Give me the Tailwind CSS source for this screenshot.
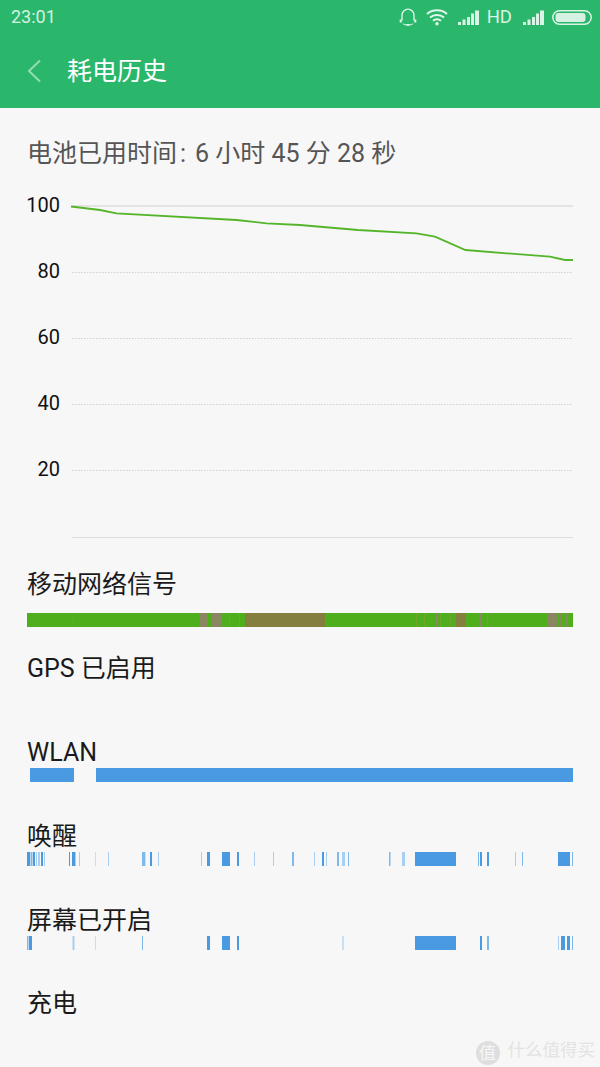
<!DOCTYPE html>
<html lang="zh">
<head>
<meta charset="utf-8">
<script src="https://cdn.jsdelivr.net/npm/@tailwindcss/browser@4"></script>
</head>
<body class="m-0 bg-[#f7f7f7]">
<div class="relative w-[600px] h-[1067px] overflow-hidden bg-[#f7f7f7] font-['Roboto','Noto_Sans_CJK_SC',sans-serif]">
  <header class="h-[108px] bg-[#2ab76b] flex flex-col">
    <div class="h-[34px] flex items-center justify-between pl-[11px] pr-[8px] text-[#d4f1e1]">
      <span class="text-[18px] leading-none">23:01</span>
      <div class="flex items-center">
        <svg class="w-[18px] h-[18px]" viewBox="0 0 18 18" fill="none" stroke="#e4f7ed" stroke-width="1.300"><path d="M3 12.500V7.200a6 6 0 0 1 12 0v5.300"/><path d="M1.700 11.500v3M16.300 11.500v3" stroke-width="2"/><path d="M4 15.800c1 .8 2 1 3.500 1.100M14 15.800c-1 .8-2 1-3.500 1.100" stroke-width="1"/><rect x="7.300" y="16" width="3.400" height="1.800" fill="#e4f7ed" stroke="none"/></svg>
        <svg class="w-[22px] h-[18px] ml-[9px]" viewBox="0 0 22 18" fill="none" stroke="#e4f7ed" stroke-width="2"><path d="M1 6c5.500-5 14.500-5 20 0M4 9.500c3.800-3.400 10.200-3.400 14 0M7 12.700c2.200-1.800 5.800-1.800 8 0"/><circle cx="11" cy="15.700" r="1.700" fill="#e4f7ed" stroke="none"/></svg>
        <svg class="w-[21px] h-[15px] ml-[10px]" viewBox="0 0 21 15" fill="#d9f3e5"><rect x="0" y="12" width="3" height="3"/><rect x="4.500" y="9.500" width="3" height="5.500"/><rect x="9" y="7" width="3" height="8"/><rect x="13" y="3.500" width="3" height="11.500"/><rect x="17" y="0.500" width="4" height="14.500"/></svg>
        <span class="text-[18.500px] leading-none ml-[8px] text-[#d9f3e5]">HD</span>
        <svg class="w-[21px] h-[15px] ml-[11px]" viewBox="0 0 21 15" fill="#d9f3e5"><rect x="0" y="12" width="3" height="3"/><rect x="4.500" y="9.500" width="3" height="5.500"/><rect x="9" y="7" width="3" height="8"/><rect x="13" y="3.500" width="3" height="11.500"/><rect x="17" y="0.500" width="4" height="14.500"/></svg>
        <svg class="w-[40px] h-[15px] ml-[8px]" viewBox="0 0 40 15"><rect x="0.800" y="0.800" width="38.400" height="13.400" rx="6.700" fill="none" stroke="#d9f3e5" stroke-width="1.500"/><rect x="3.500" y="3" width="30" height="9" rx="3" fill="#d4f1e1"/></svg>
      </div>
    </div>
    <div class="flex-1 flex items-center">
      <svg class="w-[14px] h-[24px] ml-[27px]" viewBox="0 0 14 24" fill="none" stroke="#95dcb5" stroke-width="2"><path d="M13 1.500 2 12l11 10.500"/></svg>
      <h1 class="ml-[26px] pt-[1px] text-[25px] leading-none font-normal text-white">耗电历史</h1>
    </div>
  </header>

  <div class="h-[82px] pl-[27px] flex items-center text-[25px] leading-none text-[#555] pt-[8px] whitespace-pre">电池已用时间<span class="ml-[3px] mr-[9px]">:</span>6 小时 45 分 28 秒</div>

  <svg class="block w-[600px] h-[357px]" viewBox="0 190 600 357" font-family="Roboto" font-size="20" fill="#111">
    <line x1="72" x2="573" y1="206" y2="206" stroke="#dedede" stroke-width="1.500"/>
    <g stroke="#cfcfcf" stroke-dasharray="1.500 1.500">
      <line x1="72" x2="573" y1="272.500" y2="272.500"/>
      <line x1="72" x2="573" y1="338.500" y2="338.500"/>
      <line x1="72" x2="573" y1="404.500" y2="404.500"/>
      <line x1="72" x2="573" y1="470.500" y2="470.500"/>
    </g>
    <line x1="72" x2="573" y1="537.500" y2="537.500" stroke="#dedede"/>
    <g text-anchor="end">
      <text x="60" y="212">100</text>
      <text x="60" y="278">80</text>
      <text x="60" y="344">60</text>
      <text x="60" y="410">40</text>
      <text x="60" y="476">20</text>
    </g>
    <polyline fill="none" stroke="#55b52a" stroke-width="1.800" points="71,206.500 100,210 116.500,213.300 236.500,220 266.500,223.300 300,225 358,230 416.500,233.300 435,236.700 465.500,250 550,256.700 565,260 573,260"/>
  </svg>

  <section class="h-[84px] flex flex-col pl-[27px] pr-[27px] pt-[23px]">
    <h2 class="h-[43px] pt-[1px] text-[25px] leading-[28px] font-normal text-[#1a1a1a]">移动网络信号</h2>
    <svg class="block w-[546px] h-[14px]" viewBox="27 0 546 14">
      <rect x="27" width="546" height="14" fill="#4fae1c"/>
      <g fill="#8a8662">
        <rect x="73" width="1" height="14" fill="#7d9a3a"/>
        <rect x="200" width="7.500" height="14"/>
        <rect x="212" width="10" height="14"/>
        <rect x="229" width="1" height="14" fill="#6ea52a"/>
        <rect x="239" width="1" height="14" fill="#6ea52a"/>
        <rect x="245" width="80" height="14" fill="#857f3f"/>
        <rect x="416" width="1" height="14" fill="#6ea52a"/>
        <rect x="424" width="1" height="14" fill="#6ea52a"/>
        <rect x="436" width="2" height="14"/>
        <rect x="440" width="1" height="14" fill="#6ea52a"/>
        <rect x="450" width="1" height="14" fill="#6ea52a"/>
        <rect x="456" width="9.500" height="14" fill="#857f3f"/>
        <rect x="480" width="2" height="14"/>
        <rect x="487" width="1" height="14" fill="#6ea52a"/>
        <rect x="547" width="10" height="14"/>
        <rect x="559" width="2" height="14"/>
        <rect x="565" width="3" height="14"/>
      </g>
    </svg>
  </section>

  <section class="h-[84px] pl-[27px] pr-[27px] pt-[23px]">
    <h2 class="h-[30px] pt-[1px] text-[25px] leading-[28px] font-normal text-[#1a1a1a]">GPS 已启用</h2>
  </section>

  <section class="h-[84px] pl-[27px] pr-[27px] pt-[23px]">
    <h2 class="h-[30px] pt-[1px] text-[25px] leading-[28px] font-normal text-[#1a1a1a]">WLAN</h2>
    <svg class="block w-[546px] h-[14px]" viewBox="27 0 546 14" fill="#4a9ae2">
      <rect x="30" width="44" height="14"/>
      <rect x="96" width="477" height="14"/>
    </svg>
  </section>

  <section class="h-[84px] pl-[27px] pr-[27px] pt-[23px]">
    <h2 class="h-[30px] pt-[1px] text-[25px] leading-[28px] font-normal text-[#1a1a1a]">唤醒</h2>
    <svg class="block w-[546px] h-[14px]" viewBox="27 0 546 14" fill="#4a9ae2">
      <rect x="27" width="3" height="14"/><rect x="30.500" width="2" height="14" fill="#7fb8ea"/><rect x="33" width="2" height="14"/><rect x="36" width="1" height="14" fill="#a8cff0"/>
      <rect x="38" width="2" height="14" fill="#a8cff0"/>
      <rect x="41" width="2" height="14"/><rect x="44" width="1" height="14" fill="#a8cff0"/>
      <rect x="69" width="1" height="14"/><rect x="72" width="3" height="14"/><rect x="75" width="1" height="14" fill="#a8cff0"/><rect x="79" width="1" height="14" fill="#a8cff0"/>
      <rect x="95" width="1" height="14" fill="#c5dff5"/><rect x="108" width="1" height="14" fill="#a8cff0"/>
      <rect x="142" width="3" height="14" fill="#7fb8ea"/><rect x="145" width="1" height="14" fill="#c5dff5"/><rect x="150" width="2" height="14"/><rect x="158" width="1" height="14" fill="#a8cff0"/>
      <rect x="201" width="1" height="14" fill="#a8cff0"/><rect x="207" width="3" height="14"/>
      <rect x="222" width="8" height="14"/>
      <rect x="237" width="2" height="14"/>
      <rect x="254" width="1" height="14" fill="#a8cff0"/><rect x="273" width="1" height="14" fill="#a8cff0"/><rect x="292" width="2" height="14" fill="#7fb8ea"/>
      <rect x="314" width="1" height="14" fill="#a8cff0"/><rect x="322" width="2" height="14"/><rect x="326" width="1" height="14" fill="#a8cff0"/>
      <rect x="337" width="2" height="14" fill="#7fb8ea"/><rect x="342" width="3" height="14" fill="#a8cff0"/><rect x="348" width="1" height="14" fill="#7fb8ea"/>
      <rect x="389" width="1.500" height="14" fill="#7fb8ea"/><rect x="402" width="3" height="14" fill="#a8cff0"/>
      <rect x="415" width="41" height="14"/>
      <rect x="478" width="1" height="14" fill="#7fb8ea"/><rect x="480" width="2" height="14"/><rect x="487" width="2" height="14"/>
      <rect x="515" width="1" height="14" fill="#a8cff0"/><rect x="522" width="1" height="14" fill="#7fb8ea"/>
      <rect x="558" width="12" height="14"/><rect x="572" width="1" height="14" fill="#7fb8ea"/>
    </svg>
  </section>

  <section class="h-[84px] pl-[27px] pr-[27px] pt-[23px]">
    <h2 class="h-[30px] pt-[1px] text-[25px] leading-[28px] font-normal text-[#1a1a1a]">屏幕已开启</h2>
    <svg class="block w-[546px] h-[14px]" viewBox="27 0 546 14" fill="#4a9ae2">
      <rect x="27" width="1.500" height="14" fill="#7fb8ea"/><rect x="29" width="3" height="14"/>
      <rect x="72.500" width="2" height="14" fill="#a8cff0"/>
      <rect x="95" width="1" height="14" fill="#c5dff5"/>
      <rect x="142" width="1" height="14" fill="#7fb8ea"/>
      <rect x="207" width="3" height="14"/>
      <rect x="222" width="8" height="14"/>
      <rect x="237" width="2" height="14"/>
      <rect x="342" width="2" height="14" fill="#c5dff5"/>
      <rect x="415" width="41" height="14"/>
      <rect x="480" width="2" height="14"/><rect x="487" width="2" height="14" fill="#7fb8ea"/>
      <rect x="558" width="1" height="14" fill="#a8cff0"/><rect x="561" width="4" height="14"/><rect x="567" width="3" height="14"/><rect x="572" width="1" height="14" fill="#7fb8ea"/>
    </svg>
  </section>

  <section class="pl-[27px] pt-[23px]">
    <h2 class="text-[25px] leading-[28px] font-normal text-[#1a1a1a]">充电</h2>
  </section>

  <div class="absolute right-[5px] bottom-[2px] flex items-center">
    <span class="w-[24px] h-[24px] rounded-full bg-[#dedede] text-[#f7f7f7] text-[17px] leading-[24px] text-center">值</span>
    <span class="ml-[8px] text-[17.500px] leading-none text-[#e3e3e3] mb-[4px]">什么值得买</span>
  </div>
</div>
</body>
</html>
